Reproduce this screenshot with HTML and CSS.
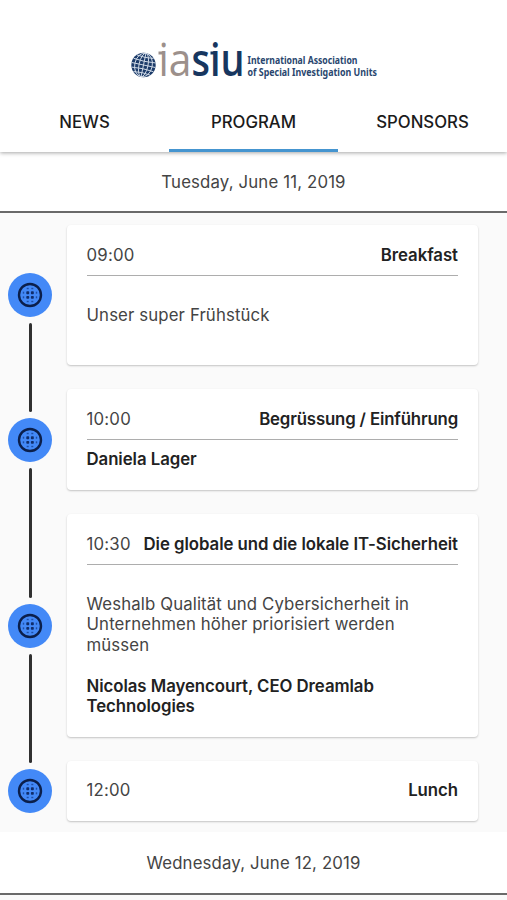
FILE: index.html
```html
<!DOCTYPE html>
<html lang="de">
<head>
<meta charset="utf-8">
<title>IASIU Program</title>
<link rel="stylesheet" href="styles.css">
</head>
<body>
<svg width="0" height="0" class="defs">
  <symbol id="globe" viewBox="0 0 26 26">
    <circle cx="13" cy="13" r="11" fill="none" stroke="#0b1f4b" stroke-width="2.4"/>
    <g fill="#102d6b">
      <rect x="9.3" y="9.3" width="2.900" height="2.900" rx=".8"/><rect x="13.900" y="9.3" width="2.900" height="2.900" rx=".8"/>
      <rect x="9.3" y="13.900" width="2.900" height="2.900" rx=".8"/><rect x="13.900" y="13.900" width="2.900" height="2.900" rx=".8"/>
    </g>
    <g fill="#1f50a8">
      <rect x="9.7" y="5.800" width="2" height="1.4"/><rect x="14.3" y="5.800" width="2" height="1.4"/>
      <rect x="9.7" y="18.800" width="2" height="1.4"/><rect x="14.3" y="18.800" width="2" height="1.4"/>
      <rect x="5.800" y="9.700" width="1.4" height="2"/><rect x="5.800" y="14.300" width="1.4" height="2"/>
      <rect x="18.800" y="9.700" width="1.4" height="2"/><rect x="18.800" y="14.300" width="1.4" height="2"/>
    </g>
  </symbol>
</svg>
<header class="header">
  <svg class="logo" width="260" height="72" viewBox="130 20 260 72">
    <circle cx="143.5" cy="65" r="12.2" fill="#1d3c6a"/>
    <g fill="none" stroke="#d3dce8" stroke-width=".9" transform="rotate(12 143.5 65)">
      <path d="M143.5 53v24M131.500 65h24M132.500 60.500q11 1.500 22 0M132.500 69.500q11-1.500 22 0M135 56.500q8.500 1.500 17 0M135 73.500q8.500-1.500 17 0"/>
      <ellipse cx="143.500" cy="65" rx="4.500" ry="12"/>
      <ellipse cx="143.500" cy="65" rx="8.800" ry="12"/>
    </g>
    <text class="logo-mark logo-grey" x="158.500" y="76" textLength="33" lengthAdjust="spacingAndGlyphs">ia</text>
    <text class="logo-mark logo-blue" x="191.500" y="76" textLength="53" lengthAdjust="spacingAndGlyphs">siu</text>
    <path class="logo-grey" d="M158.500 51.500h5v3h-5z"/>
    <path class="logo-blue" d="M210.500 51.500h5v3h-5z"/>
    <text class="logo-name" x="247.500" y="64" textLength="110" lengthAdjust="spacingAndGlyphs">International Association</text>
    <text class="logo-name" x="247.500" y="75.700" textLength="129.500" lengthAdjust="spacingAndGlyphs">of Special Investigation Units</text>
  </svg>
  <nav class="tabs">
    <a class="tab">NEWS</a>
    <a class="tab active">PROGRAM</a>
    <a class="tab">SPONSORS</a>
  </nav>
</header>
<main>
  <h2 class="date">Tuesday, June 11, 2019</h2>
  <section class="timeline">
    <article class="event">
      <div class="rail"><i class="line none"></i><span class="dot"><svg width="26" height="26"><use href="#globe"/></svg></span><i class="line down"></i></div>
      <div class="card breakfast">
        <div class="title"><time>09:00</time><b>Breakfast</b></div>
        <p class="text">Unser super Frühstück</p>
      </div>
    </article>
    <article class="event">
      <div class="rail"><i class="line up"></i><span class="dot"><svg width="26" height="26"><use href="#globe"/></svg></span><i class="line down"></i></div>
      <div class="card opening">
        <div class="title"><time>10:00</time><b>Begrüssung / Einführung</b></div>
        <p class="speaker">Daniela Lager</p>
      </div>
    </article>
    <article class="event">
      <div class="rail"><i class="line up"></i><span class="dot"><svg width="26" height="26"><use href="#globe"/></svg></span><i class="line down"></i></div>
      <div class="card talk">
        <div class="title"><time>10:30</time><b>Die globale und die lokale IT-Sicherheit</b></div>
        <p class="text">Weshalb Qualität und Cybersicherheit in<br>Unternehmen höher priorisiert werden<br>müssen</p>
        <p class="speaker">Nicolas Mayencourt, CEO Dreamlab<br>Technologies</p>
      </div>
    </article>
    <article class="event last">
      <div class="rail"><i class="line up"></i><span class="dot"><svg width="26" height="26"><use href="#globe"/></svg></span><i class="line none"></i></div>
      <div class="card lunch">
        <div class="title plain"><time>12:00</time><b>Lunch</b></div>
      </div>
    </article>
  </section>
  <h2 class="date second">Wednesday, June 12, 2019</h2>
</main>
</body>
</html>
```

FILE: styles.css
```css
* { box-sizing: border-box; }
body {
  margin: 0;
  height: 900px;
  overflow: hidden;
  background: #fafafa;
  color: #444;
  font: 16.8px/20.7px Inter, "Liberation Sans", sans-serif;
}
.defs { display: block; }
.header {
  height: 152px;
  padding-top: 20px;
  background: #fff;
  box-shadow: 0 1px 4px rgba(0, 0, 0, .35);
  position: relative;
}
.logo { display: block; margin-left: 130px; }
.logo-mark { font: 500 46px "Open Sans", sans-serif; }
.logo-grey { fill: #9c908b; }
.logo-blue { fill: #17365f; font-weight: 600; }
.logo-name { font: bold 10.3px "Noto Sans", sans-serif; fill: #29466e; }
.tabs { display: grid; grid-template-columns: repeat(3, 1fr); height: 60px; }
.tab {
  display: flex;
  justify-content: center;
  padding-top: 20px;
  color: #1b1b1b;
  font-weight: 500;
  border-bottom: 3px solid transparent;
}
.tab.active { border-color: #4595d0; }
.date {
  margin: 0;
  height: 61px;
  padding-top: 20px;
  background: #fff;
  border-bottom: 2px solid #6a6a6a;
  text-align: center;
  font-size: 16.8px;
  font-weight: 400;
  letter-spacing: .15px;
}
.date.second { height: 63px; padding-top: 21px; }
.event { display: flex; padding-right: 29px; }
.rail {
  display: flex;
  flex-direction: column;
  align-items: center;
  width: 60px;
  margin-right: 7px;
}
.dot {
  display: grid;
  place-items: center;
  width: 44px;
  height: 44px;
  border-radius: 50%;
  background: #4389f7;
}
.line { flex: 1; width: 3px; background: #303030; }
.line.none { background: none; }
.line.up { margin-bottom: 6px; border-radius: 0 0 2px 2px; }
.line.down { margin-top: 6px; border-radius: 2px 2px 0 0; }
.line.none:first-child { margin-bottom: 6px; }
.line.none:last-child { margin-top: 6px; }
.card {
  flex: 1;
  margin: 12px 0;
  padding: 0 20px 0 19.5px;
  background: #fff;
  border-radius: 4px;
  box-shadow: 0 1px 2px rgba(0, 0, 0, .22);
}
.last .card { margin-bottom: 11px; }
.breakfast { height: 140px; }
.opening { height: 101px; }
.talk { height: 223px; }
.lunch { height: 60px; }
.title {
  display: flex;
  justify-content: space-between;
  height: 51px;
  padding-top: 20px;
  border-bottom: 1px solid #adadad;
  white-space: nowrap;
}
.title.plain { border: 0; padding-top: 19px; }
time { letter-spacing: .2px; }
b, .speaker { color: #222; font-weight: 600; letter-spacing: -.05px; }
.opening b { letter-spacing: -.15px; }
p { margin: 0; white-space: nowrap; }
.text { padding-top: 29px; letter-spacing: .12px; }
.speaker { padding-top: 9px; }
.talk .text { padding-top: 28.5px; }
.talk .speaker { padding-top: 20px; }
```
